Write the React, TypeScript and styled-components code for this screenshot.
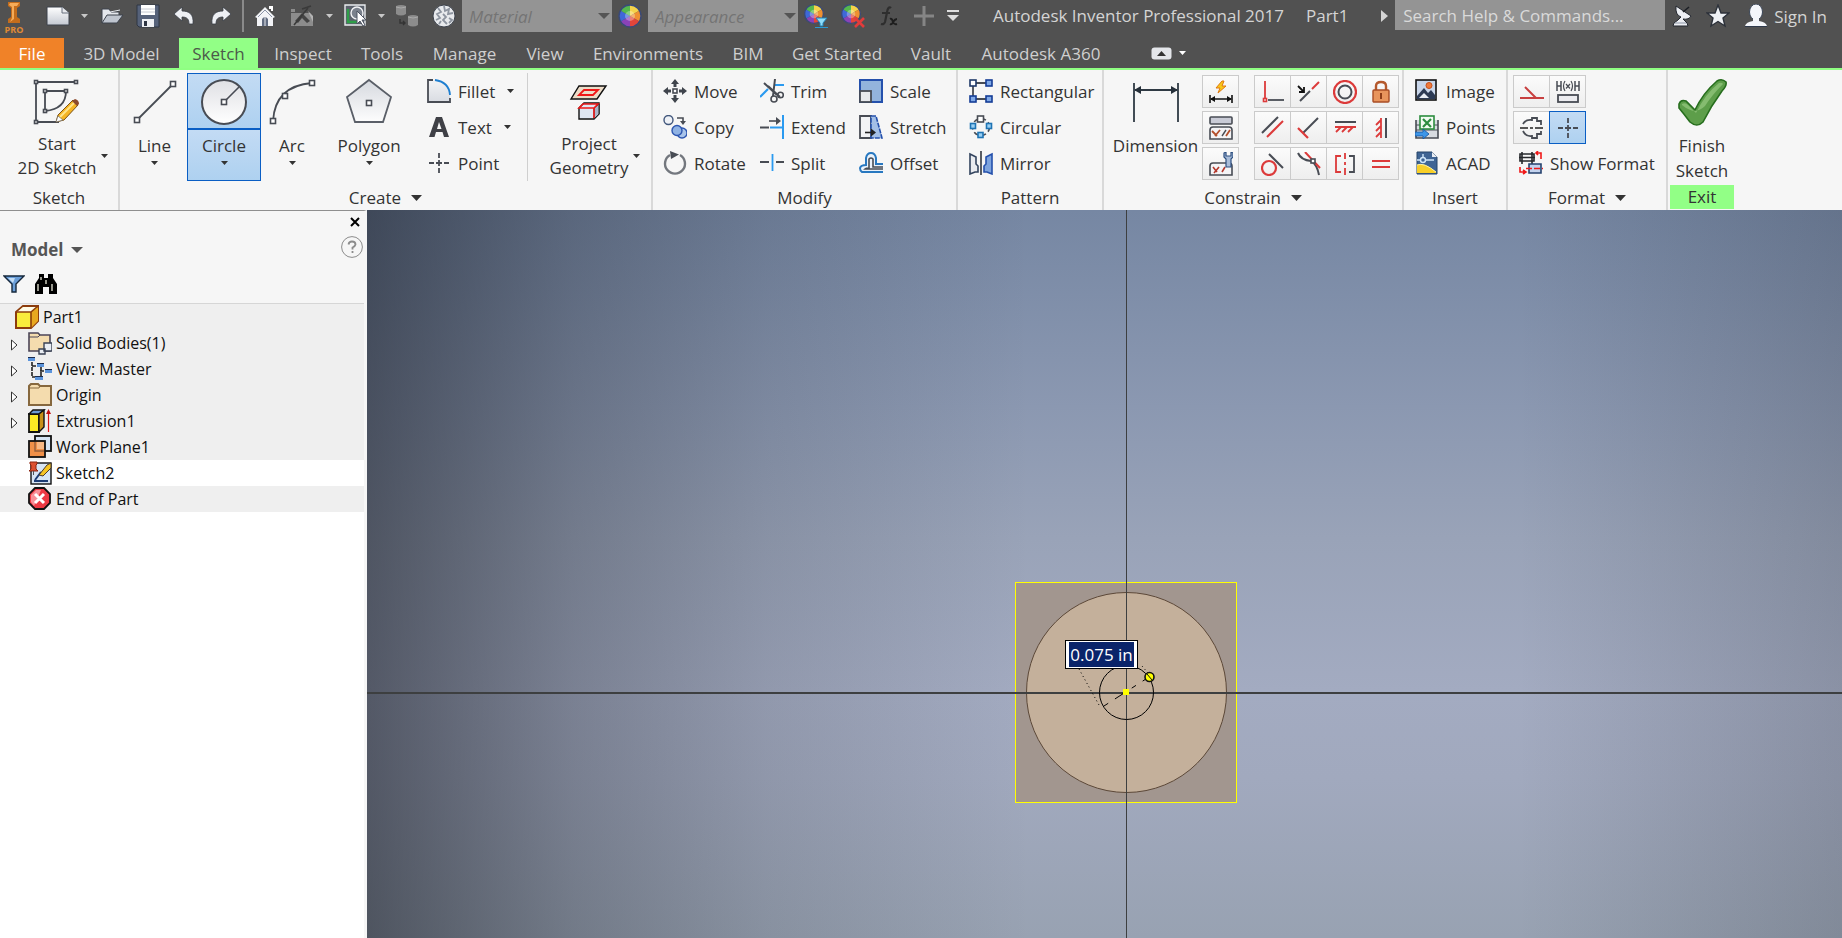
import React from "react";
import styled, { createGlobalStyle, css } from "styled-components";

const UI = `"Open Sans", "Noto Sans", sans-serif`;

const Global = createGlobalStyle`
  * { box-sizing: border-box; }
  body { margin: 0; background: #fff; font-family: ${UI}; color: #333; }
  button, input, select { font: inherit; color: inherit; margin: 0; }
  svg { display: block; flex: none; }
`;

const bare = css`
  border: 0;
  padding: 0;
  background: none;
  display: flex;
  align-items: center;
  justify-content: center;
`;

const App = styled.div`
  min-height: 100vh;
  display: flex;
  flex-direction: column;
`;

/* ---------- title bar ---------- */

const TitleBar = styled.header`
  height: 38px;
  background: #515151;
  display: flex;
  align-items: flex-start;
  color: #d4d4d4;
  font-size: 17px;
`;
const Tool = styled.button<{ $w: number }>`
  ${bare}
  width: ${(p) => p.$w}px;
  height: 32px;
`;
const Logo = styled.div`
  width: 43px;
  padding: 2px 15px 0 0;
  display: flex;
  flex-direction: column;
  align-items: center;
  color: #e08a34;
  font-size: 9px;
  line-height: 12px;
  font-weight: 700;
`;
const Divider = styled.span`
  width: 2px;
  height: 32px;
  margin: 0 3px 0 2px;
  background: #8a8a8a;
`;
const Combo = styled.label`
  position: relative;
  width: 150px;
  height: 32px;
  svg { position: absolute; right: 2px; top: 13px; }
`;
const ComboSelect = styled.select`
  appearance: none;
  width: 100%;
  height: 32px;
  border: 0;
  border-radius: 0;
  padding: 0 20px 0 7px;
  background: #949494;
  color: #747474;
  font-style: italic;
  opacity: 1;
`;
const Title = styled.h1`
  margin: 0 0 0 29px;
  font-size: 17px;
  font-weight: 400;
  line-height: 32px;
  white-space: pre;
`;
const DocName = styled.span`
  margin-left: 22px;
  line-height: 32px;
`;
const Search = styled.input`
  width: 270px;
  height: 30px;
  border: 0;
  padding: 0 8px;
  background: #949494;
  &::placeholder { color: #dadada; opacity: 1; }
`;
const TitleRight = styled.div`
  margin-left: auto;
  padding-right: 15px;
  display: flex;
`;
const SignIn = styled.button`
  ${bare}
  height: 32px;
  margin-left: 7px;
  gap: 6px;
`;

/* ---------- tabs ---------- */

const Tabs = styled.nav`
  height: 32px;
  background: #515151;
  border-bottom: 2px solid #8fff82;
  display: flex;
  align-items: stretch;
  font-size: 17px;
`;
const Tab = styled.button<{ $kind?: "file" | "active"; $w: number }>`
  ${bare}
  width: ${(p) => p.$w}px;
  white-space: nowrap;
  color: ${(p) => (p.$kind === "file" ? "#fff" : p.$kind === "active" ? "#4c5a4a" : "#cfcfcf")};
  background: ${(p) => (p.$kind === "file" ? "#f08228" : p.$kind === "active" ? "#92ff86" : "none")};
`;
const MinimizeTab = styled.button`
  ${bare}
  margin-left: 34px;
  gap: 7px;
`;

/* ---------- ribbon ---------- */

const Ribbon = styled.div`
  height: 140px;
  background: #f6f6f6;
  display: flex;
  font-size: 17px;
`;
const Panel = styled.section<{ $w: number }>`
  width: ${(p) => p.$w}px;
  border-right: 2px solid #d9d9d9;
  display: flex;
  flex-direction: column;
`;
const PanelBody = styled.div<{ $pad?: number; $h?: number }>`
  height: ${(p) => p.$h ?? 116}px;
  padding: 3px 0 0 ${(p) => p.$pad ?? 0}px;
  display: flex;
  align-items: flex-start;
`;
const PanelTitle = styled.h2`
  margin: 0;
  height: 24px;
  font-size: 17px;
  font-weight: 400;
  line-height: 24px;
  display: flex;
  align-items: center;
  justify-content: center;
  gap: 10px;
`;
const Big = styled.button<{ $w: number }>`
  ${bare}
  width: ${(p) => p.$w}px;
  height: 108px;
  padding-top: 5px;
  flex-direction: column;
  justify-content: flex-start;
  line-height: 24px;
`;
const BigLabel = styled.span<{ $two?: boolean }>`
  display: flex;
  flex-direction: column;
  align-items: center;
  gap: ${(p) => (p.$two ? 0 : 3)}px;
  padding-top: ${(p) => (p.$two ? 6 : 8)}px;
  white-space: nowrap;
`;
const TwoLine = styled.span`
  display: flex;
  align-items: center;
  gap: 5px;
  text-align: center;
  padding-left: 12px;
`;
const FinishLabel = styled.span`
  padding-top: 5px;
  line-height: 25px;
`;
const CircleTool = styled.div`
  width: 74px;
  height: 108px;
  margin: 0 2px 0 0;
  border: 1px solid #0a5ec4;
  display: flex;
  flex-direction: column;
  background: #b6d4f2;
`;
const CircleHalf = styled.button<{ $h: number }>`
  ${bare}
  height: ${(p) => p.$h}px;
  flex-direction: column;
  gap: 3px;
  line-height: 24px;
  padding-top: 1px;
  background: linear-gradient(#c3dbf4, #aed1f0);
  & + & {
    border-top: 2px solid #0a5ec4;
    justify-content: flex-start;
    padding-top: 4px;
  }
`;
const List = styled.div<{ $w: number; $inset?: number }>`
  width: ${(p) => p.$w}px;
  padding-left: ${(p) => p.$inset ?? 0}px;
`;
const Small = styled.button`
  ${bare}
  height: 36px;
  justify-content: flex-start;
  gap: 7px;
  white-space: nowrap;
  svg + span + svg { margin-left: 5px; }
`;
const VLine = styled.span`
  width: 1px;
  height: 108px;
  background: #cfcfcf;
`;
const IconGrid = styled.div<{ $cols: number; $rows: number }>`
  display: grid;
  height: ${(p) => p.$rows * 36}px;
  grid-template-columns: repeat(${(p) => p.$cols}, 36px);
  grid-auto-rows: 36px;
  padding-top: 2px;
`;
const Cell = styled.button<{ $on?: boolean }>`
  ${bare}
  height: 33px;
  margin-right: -1px;
  border: 1px solid ${(p) => (p.$on ? "#0a5ec4" : "#cbcbcb")};
  background: ${(p) => (p.$on ? "linear-gradient(#c3dbf4, #aed1f0)" : "linear-gradient(#fbfbfb, #eeeeee)")};
  z-index: ${(p) => (p.$on ? 1 : 0)};
`;
const ExitPanel = styled.section`
  width: 68px;
  padding: 0 2px;
`;
const Exit = styled(PanelTitle)`
  background: #92ff86;
`;

/* ---------- workspace ---------- */

const Workspace = styled.main`
  flex: 1;
  display: flex;
`;
const Browser = styled.aside`
  width: 367px;
  border-top: 1px solid #8f8f8f;
  border-right: 3px solid #f6f6f6;
  background: #fff;
  display: flex;
  flex-direction: column;
`;
const BrowserHead = styled.div`
  height: 93px;
  background: #f6f6f6;
  border-bottom: 1px solid #d6d6d6;
  display: grid;
  grid-template-rows: 22px 32px 38px;
`;
const HeadRow = styled.div`
  display: flex;
  align-items: flex-start;
  justify-content: space-between;
  padding: 3px 1px 0 11px;
`;
const HeadTools = styled.div`
  display: flex;
  align-items: center;
  gap: 9px;
  padding-left: 3px;
`;
const CloseRow = styled.div`
  display: flex;
  align-items: center;
  justify-content: flex-end;
  padding-right: 4px;
`;
const Plain = styled.button`
  ${bare}
  gap: 7px;
`;
const ModelTitle = styled(Plain)`
  font-weight: 700;
  font-size: 17px;
  line-height: 28px;
  color: #555;
`;
const Tree = styled.ul`
  list-style: none;
  margin: 0;
  padding: 0;
`;
const Node = styled.li<{ $root?: boolean; $on?: boolean }>`
  height: 26px;
  padding-left: ${(p) => (p.$root ? 15 : 11)}px;
  background: ${(p) => (p.$on ? "#fff" : "#efefef")};
  display: flex;
  align-items: center;
  gap: 4px;
  font-size: 16px;
  line-height: 24px;
  color: #111;
`;
const Twist = styled.span`
  width: 13px;
  padding-top: 3px;
`;
const Viewport = styled.section`
  flex: 1;
  position: relative;
  overflow: hidden;
  background:
    linear-gradient(90deg, rgba(16, 19, 26, 0.54), rgba(16, 19, 26, 0.28) 14%, rgba(16, 19, 26, 0.12) 27%, transparent 45%, transparent 78%, rgba(16, 19, 26, 0.17)),
    linear-gradient(#7687a3, #8b98b1 27%, #99a3b8 45%, #a3abc1 66%, #a1a9be 78%, #98a2b2);
`;
const AxisX = styled.span`
  position: absolute;
  left: 0;
  right: 0;
  top: 66.21%;
  height: 2px;
  background: #3d3f40;
`;
const AxisY = styled.span`
  position: absolute;
  top: 0;
  bottom: 0;
  left: 51.46%;
  width: 1px;
  background: #3d3f40;
`;
const Origin = styled.div`
  position: absolute;
  left: 51.46%;
  top: 66.21%;
`;
const Profile = styled.svg`
  position: absolute;
  left: -112px;
  top: -111px;
`;
const ValueBox = styled.input`
  position: absolute;
  left: -61px;
  top: -52px;
  width: 73px;
  height: 29px;
  border: 1px solid #000;
  padding: 0 1px;
  background: #0a246a;
  box-shadow: inset 0 0 0 1px #fff, inset 3px 0 #fff, inset -3px 0 #fff;
  color: #fff;
  font-size: 17px;
  text-align: center;
`;

/* ---------- icons ---------- */

const Svg = ({ s = 24, h, children }: { s?: number; h?: number; children: React.ReactNode }) => (
  <svg width={s} height={h ?? s} viewBox={`0 0 ${s} ${h ?? s}`} fill="none" aria-hidden="true">{children}</svg>
);
const Caret = ({ s = 7, c = "#333" }: { s?: number; c?: string }) => (
  <Svg s={s} h={Math.ceil(s / 2)}><path d={`M0 0H${s}L${s / 2} ${Math.ceil(s / 2)}Z`} fill={c} /></Svg>
);
const G = "#484c54";
const R = "#dc3a3a";
const Sq = ({ x, y, n = 4, f = "#fff", c = G }: { x: number; y: number; n?: number; f?: string; c?: string }) => (
  <rect x={x - n / 2} y={y - n / 2} width={n} height={n} fill={f} stroke={c} strokeWidth="1.6" />
);
const Shade = ({ id, a = "#fff", b = "#ccd0d8" }: { id: string; a?: string; b?: string }) => (
  <linearGradient id={id} x1="0" y1="0" x2="0" y2="1"><stop stopColor={a} /><stop offset="1" stopColor={b} /></linearGradient>
);

const wheelColors = ["#f4d24a", "#ef9030", "#e2453a", "#8a42b8", "#3f68d8", "#55b84e"];
const Wheel = ({ cx, cy, r }: { cx: number; cy: number; r: number }) => (
  <g>
    {wheelColors.map((c, i) => {
      const a = ((i * 60 - 90) * Math.PI) / 180;
      const b = ((i * 60 - 30) * Math.PI) / 180;
      return <path key={c} fill={c} d={`M${cx} ${cy}L${cx + r * Math.cos(a)} ${cy + r * Math.sin(a)}A${r} ${r} 0 0 1 ${cx + r * Math.cos(b)} ${cy + r * Math.sin(b)}Z`} />;
    })}
    <circle cx={cx} cy={cy} r={r / 2.2} fill="#fff" opacity=".3" />
    <circle cx={cx} cy={cy} r={r} stroke="#3a4a78" strokeWidth="1.4" />
  </g>
);

const I = {
  logo: <Svg s={16} h={22}><path d="M2 0H14V4L11 6V15L14 17V21H2V17L5 15V6L2 4Z" fill="#c46d1c" /><path d="M4 1H13L11 4H8V17L4 20L6 16V5L3 3Z" fill="#f6ab58" /></Svg>,
  fresh: <Svg><defs><Shade id="nw" b="#c4c9d2" /></defs><path d="M1 3H16L23 9V21H1Z" fill="url(#nw)" stroke="#3c424c" /><path d="M16 3V9H23" fill="#e7e9ee" stroke="#68707e" /></Svg>,
  open: <Svg><path d="M2 19V5H9L11 8H19V12" fill="#e4e7ec" stroke="#3c424c" /><path d="M2 19L7 11H23L17 19Z" fill="#bfc5cf" stroke="#3c424c" /><path d="M10 8L20 6" stroke="#e4e7ec" /></Svg>,
  save: <Svg><path d="M1 1H23V23H3L1 21Z" fill="#56627a" stroke="#2f3644" /><path d="M5 1H19V11H5Z" fill="#fff" /><path d="M6 15H18V23H6Z" fill="#eef0f4" /><path d="M8 17H11V22H8Z" fill="#2f3644" /><path d="M5 5H19M5 8H19" stroke="#c6cad2" /></Svg>,
  undo: <Svg s={22}><path d="M1 9L9 2V6C16 6 21 9 20 19H16C16 14 14 12 9 12V16Z" fill="#eef0f4" stroke="#3a3f48" strokeWidth=".8" /></Svg>,
  redo: <Svg s={22}><path d="M21 9L13 2V6C6 6 1 9 2 19H6C6 14 8 12 13 12V16Z" fill="#eef0f4" stroke="#3a3f48" strokeWidth=".8" /></Svg>,
  home: <Svg s={22} h={24}><path d="M16 5V3H18V7" stroke="#fff" strokeWidth="2" /><path d="M1 13L11 3L21 13L19 14V22H3V14Z" fill="#f2f3f6" /><path d="M4 13L11 6L18 13" stroke="#8a93a6" /><path d="M8 22V15Q11 11 14 15V22Z" fill="#626c80" /><path d="M11 13V22" stroke="#e6e8ec" /></Svg>,
  pic: <Svg><path d="M1 5H5V8H1ZM1 9H20L23 13V22H1Z" fill="#8c8c8c" /><path d="M5 17L12 9L20 17L17 19L12 14L8 19Z" fill="#444" /><path d="M12 5L21 2M4 21L18 4" stroke="#3a3a3a" strokeWidth="1.6" /><path d="M18 7L23 12V18Z" fill="#b4b4b4" /></Svg>,
  pick: <Svg><path d="M1 1H21V21H1Z" fill="#5c626c" stroke="#e9ebee" strokeWidth="1.4" /><path d="M4 5V18H14" stroke="#2e9e48" strokeWidth="2.4" /><circle cx="13" cy="9" r="6" fill="#7a818c" stroke="#f2f3f5" strokeWidth="1.4" /><path d="M13 7V20L16 17L19 22L21 21L18 16H22Z" fill="#fff" stroke="#4d5462" /></Svg>,
  parts: <Svg><path d="M1 2Q6 0 11 2V10Q6 13 1 10ZM13 12Q18 10 23 12V21Q18 24 13 21Z" fill="#8c8c8c" /><path d="M1 3Q6 5 11 3M13 13Q18 15 23 13" stroke="#a9a9a9" /><path d="M5 15V19H10M8 17L10 19L8 21" stroke="#333" strokeWidth="1.4" /></Svg>,
  globe: <Svg><circle cx="12" cy="12" r="11" fill="#e8eaed" stroke="#3c424c" /><path d="M6 4L9 8L5 10L8 14L4 16M12 2L13 7L17 5L16 10L21 9M11 10L14 13L11 16L15 20M17 14L20 16L17 19M9 17L7 20" stroke="#8d949f" strokeWidth="1.8" /></Svg>,
  wheel: <Svg><Wheel cx={12} cy={12} r={11} /></Svg>,
  wheelAdd: <Svg><Wheel cx={10} cy={10} r={9.4} /><path d="M12 14H23L19 19V22H16V19Z" fill="#8fdcf8" stroke="#1f83b8" /><path d="M11 23.500H24" stroke="#2a9ad4" /></Svg>,
  wheelDel: <Svg><Wheel cx={10} cy={10} r={9.4} /><path d="M14 14L23 23M23 14L14 23" stroke="#e23b3b" strokeWidth="2.6" /></Svg>,
  fx: <Svg s={22}><path d="M13 3Q11 1 9.500 5L7 17Q6 20 3 19M4 8H12" stroke="#2e2e2e" strokeWidth="2.2" /><path d="M12 14Q14 13 15 17Q16 20 19 19M19 14Q17 14 15 17Q14 20 12 19" stroke="#1e1e1e" strokeWidth="2" /></Svg>,
  plus: <Svg s={22}><path d="M11 1V21M1 11H21" stroke="#858585" strokeWidth="3" /></Svg>,
  more: <Svg s={12} h={12}><path d="M0 1H12" stroke="#ddd" strokeWidth="2" /><path d="M0 5H12L6 11Z" fill="#ddd" /></Svg>,
  right: <Svg s={7} h={12}><path d="M0 0L7 6L0 12Z" fill="#d4d4d4" /></Svg>,
  dish: <Svg s={20} h={22}><path d="M4 1Q3 10 9 12L6 15L2 18L1 21H16L15 18L11 14Q17 15 19 11Z" fill="#eceef3" stroke="#22262e" /><path d="M11 7L17 2" stroke="#1b1e24" strokeWidth="1.6" /><path d="M3 18H14" stroke="#8d96a6" /></Svg>,
  star: <Svg s={24}><path d="M12 1L15 9H23L17 14L19 22L12 17.500L5 22L7 14L1 9H9Z" fill="#eef0f4" stroke="#2c313a" strokeWidth="1.4" /></Svg>,
  person: <Svg s={24}><ellipse cx="12" cy="8" rx="6.500" ry="8" fill="#f4f6fa" stroke="#3b4658" /><path d="M9 14H15V17Q22 18 23 22H1Q2 18 9 17Z" fill="#f4f6fa" /><path d="M1 22.500H23" stroke="#2f3a4c" /></Svg>,
};

const pencil = (
  <g><path d="M23 44L25 37L40 22L45 27L31 42Z" fill="#f6b524" stroke="#7c5214" /><path d="M27 39L42 24" stroke="#ffe48a" strokeWidth="2" /><path d="M39 23L42 21Q46 22 46 26L44 28Z" fill="#8c4a2c" /><path d="M23 44L25 38L30 42Z" fill="#fff" stroke="#666" strokeWidth=".6" /></g>
);
const B = {
  start: <Svg s={48}><path d="M43 4H3V44H26M12 13H33Q33 31 12 33Z" stroke={G} strokeWidth="1.8" />{[[3, 4], [43, 4], [3, 44], [12, 13], [33, 13], [12, 33]].map(([x, y]) => <Sq key={`${x}-${y}`} x={x} y={y} n={3} />)}{pencil}</Svg>,
  line: <Svg s={48}><path d="M6 42L42 6" stroke={G} strokeWidth="1.8" /><Sq x={6} y={42} n={5} /><Sq x={42} y={6} n={5} /></Svg>,
  circle: <Svg s={48}><defs><Shade id="ci" a="#dfe0e4" b="#fff" /></defs><circle cx="24" cy="24" r="22" fill="url(#ci)" stroke={G} strokeWidth="2" /><path d="M24 24L39 9" stroke={G} strokeWidth="1.6" /><Sq x={24} y={24} n={5} /></Svg>,
  arc: <Svg s={48}><path d="M5 43Q7 8 44 5" stroke={G} strokeWidth="1.8" /><Sq x={5} y={43} n={5} /><Sq x={17} y={18} n={5} /><Sq x={44} y={5} n={5} /></Svg>,
  polygon: <Svg s={48}><defs><Shade id="po" a="#d6d9df" b="#fdfdfd" /></defs><path d="M24 2L46 19L38 44H10L2 19Z" fill="url(#po)" stroke="#5a5f68" strokeWidth="1.8" /><Sq x={24} y={25} n={5} /></Svg>,
  project: <Svg s={48}><path d="M14 8H41L32 21H6Z" fill="#ecdcc8" stroke="#111" strokeWidth="1.4" /><path d="M19 12H33L28 17H14Z" stroke="#f01818" strokeWidth="1.8" /><path d="M14 30L19 25H34V36L29 41H14Z" fill="#dfe6f2" stroke="#111" strokeWidth="1.4" /><path d="M29 30V41L34 36V26Z" fill="#a9b4c8" stroke="#222" /><path d="M14 30L18 26H33L29 30ZM29 30V40" stroke="#f01818" strokeWidth="1.6" /></Svg>,
  dimension: <Svg s={48}><path d="M2 5V44M46 5V44M3 12H45" stroke="#2f3a44" strokeWidth="1.8" /><path d="M2 12L9 8V16ZM46 12L39 8V16Z" fill="#26303a" /></Svg>,
  finish: <Svg s={50}><path d="M2 26Q4 21 9 23L18 32Q26 15 40 3Q45 0 49 4Q50 8 45 13Q34 28 26 44Q20 50 13 44Q7 36 2 30Z" fill="#5d9e4a" stroke="#276e1e" strokeWidth="1.6" /><path d="M5 26Q8 24 11 27L19 35Q28 16 42 5Q45 4 46 6Q35 17 28 28Q18 38 5 27Z" fill="#93c57e" opacity=".75" /></Svg>,
};

const cross = <path d="M12 2V7M12 9V15M12 17V22M2 12H7M9 12H15M17 12H22" stroke={G} strokeWidth="1.8" />;
const S = {
  fillet: <Svg><defs><Shade id="fi" a="#f2f3f5" b="#d9dce2" /></defs><path d="M1 1H8Q22 4 23 16V23H1Z" fill="url(#fi)" /><path d="M6 1H1V23H23V19" stroke={G} strokeWidth="1.8" /><path d="M8 1Q22 3 23 16" stroke="#1f7fd0" strokeWidth="1.8" /></Svg>,
  text: <Svg><path d="M9 2H15L22 22H17L15.500 17H9L7.500 22H2ZM12 7L10 14H14.500Z" fill="#3f4046" fillRule="evenodd" /></Svg>,
  point: <Svg>{cross}</Svg>,
  move: <Svg><path d="M12 0L16 5H13.500V8H10.500V5H8ZM12 24L16 19H13.500V16H10.500V19H8ZM0 12L5 8V10.500H8V13.500H5V16ZM24 12L19 8V10.500H16V13.500H19V16Z" fill="#3f444c" /><Sq x={12} y={12} n={4} /></Svg>,
  copy: <Svg><circle cx="5.500" cy="5" r="4.500" fill="#eef1f6" stroke="#42577c" strokeWidth="1.4" /><path d="M14 3H20V7" stroke={G} strokeWidth="1.6" /><path d="M17 6H23L20 10Z" fill={G} /><circle cx="19" cy="18" r="5" stroke="#2d56b0" strokeWidth="1.4" fill="#a9c4ea" /><circle cx="14" cy="15.500" r="5" stroke="#2d56b0" strokeWidth="1.4" fill="#8fb2e4" /></Svg>,
  rotate: <Svg><path d="M7 4A10 10 0 1 0 17 4" stroke="#73777e" strokeWidth="2.4" /><path d="M7 0L16 3.500L8 8Z" fill={G} /></Svg>,
  trim: <Svg><path d="M0 18L8 10M14 6H24" stroke="#2a9af0" strokeWidth="2.2" /><path d="M4 4L17 16M15 0L13 17M8 7L20 18" stroke={G} strokeWidth="2" /><circle cx="20.500" cy="16" r="2.800" stroke={G} strokeWidth="1.6" /><circle cx="14" cy="20" r="3" stroke={G} strokeWidth="1.6" /></Svg>,
  extend: <Svg><path d="M0 12.500H9" stroke={G} strokeWidth="2" /><path d="M10 12.500H23M23 0V24" stroke="#2a9af0" strokeWidth="2" /><path d="M9 6H17" stroke={G} strokeWidth="1.6" /><path d="M16 2L21 6L16 10Z" fill={G} /></Svg>,
  split: <Svg><path d="M0 11H9M16 11H24" stroke={G} strokeWidth="1.8" /><path d="M12.500 3V20" stroke="#2a9af0" strokeWidth="1.8" /></Svg>,
  scale: <Svg><rect x="1" y="1" width="22" height="22" fill="#93b4dc" stroke="#2450ac" strokeWidth="2" /><rect x="1" y="12" width="11" height="11" fill="#e7e9ec" stroke={G} strokeWidth="1.8" /></Svg>,
  stretch: <Svg><path d="M1 1H12V23H1Z" fill="#f2f3f5" stroke={G} strokeWidth="1.8" /><path d="M12 1H17L23 23H12Z" fill="#a3bfe6" stroke="#2450ac" strokeWidth="1.6" strokeDasharray="5 1" /><path d="M6 17.500H13" stroke="#222" strokeWidth="1.6" /><path d="M12 13.500L17 17.500L12 21.500Z" fill="#222" /></Svg>,
  offset: <Svg><path d="M24 21H3Q1 20 1 17Q2 14 7 14V7Q8 2 12 2Q16 2 17 7V13H24" fill="#eaf2fb" stroke="#2878c0" strokeWidth="2" /><path d="M24 18H6Q7 17 10 17V8Q12 6 14 8V16H24" stroke={G} strokeWidth="1.6" /></Svg>,
  rect: <Svg><path d="M4 4H20M4 4V20H20" stroke={G} strokeWidth="1.8" /><Sq x={4} y={4} n={6} c="#1f3868" /><Sq x={20} y={4} n={6} f="#7fa8e6" c="#143c96" /><Sq x={4} y={20} n={6} f="#7fa8e6" c="#143c96" /><Sq x={20} y={20} n={6} f="#7fa8e6" c="#143c96" /></Svg>,
  circ: <Svg><circle cx="12" cy="12" r="8.500" stroke={G} strokeWidth="1.6" strokeDasharray="5 3" /><Sq x={11.5} y={4} n={6} /><Sq x={4} y={11} n={5} f="#9ad0f4" c="#1f74b4" /><Sq x={20} y={11} n={5} f="#9ad0f4" c="#1f74b4" /><Sq x={11.5} y={20} n={5} f="#9ad0f4" c="#1f74b4" /></Svg>,
  mirror: <Svg><path d="M1 3L7 6V13L9 15V21H6L1 23Z" fill="#e9ebef" stroke="#33445e" strokeWidth="1.6" /><path d="M23 3L17 6V13L15 15V21H18L23 23Z" fill="#7ea4de" stroke="#2450ac" strokeWidth="1.6" /><path d="M12 0V24" stroke={G} strokeWidth="1.8" /></Svg>,
  image: <Svg><rect x="1" y="1" width="20" height="20" fill="#c9d6ea" stroke="#111" strokeWidth="1.6" /><circle cx="14" cy="6.500" r="3" fill="#f07a3c" stroke="#c8501c" /><path d="M2 17L9 9L13 14L16 11L20 16V20H2Z" fill="#2c3a54" /><path d="M4 19L9 14L14 19Z" fill="#e8edf5" /></Svg>,
  points: <Svg><path d="M1 5V23H23V5" fill="#d7dbe0" stroke={G} strokeWidth="1.6" /><path d="M1 10H23M1 15H23" stroke={G} /><rect x="5" y="1" width="14" height="13" fill="#f2fbf2" stroke="#2b8c3e" strokeWidth="1.6" /><path d="M8 4L16 12M16 4L8 12" stroke="#2b8c3e" strokeWidth="2.2" /><path d="M0 17H8V14L14 19L8 24V21H0Z" fill="#3d96e8" stroke="#14509c" strokeWidth=".8" /></Svg>,
  acad: <Svg><path d="M2 1H17L22 6V23H2Z" fill="#3f6494" stroke="#274468" /><path d="M17 1V6H22Z" fill="#e9edf3" /><path d="M2 22V14Q8 10 21 21V22Z" fill="#f8cf28" /><path d="M2 14Q9 11 21 21" stroke="#fff3a8" /><circle cx="8" cy="9" r="2.500" stroke="#cfe6fa" strokeWidth="1.4" /><path d="M8 3V6M11 9H19M2 9H5" stroke="#cfe6fa" strokeWidth="1.4" /></Svg>,
  show: <Svg><path d="M1 3H15V10H1ZM3 1V13M13 1V13M0 6.500H16" stroke="#26282c" strokeWidth="1.6" /><path d="M10 13H22V22H10Z" fill="#c3d3ee" stroke="#26426e" strokeWidth="1.6" /><path d="M7 17.500H24" stroke="#f01818" strokeWidth="1.6" strokeDasharray="6 2" /><path d="M18 2H22V8M1 16V21H6M19 0L17 2L19 4M4 19L7 21L4 23" stroke="#f01818" strokeWidth="1.6" /></Svg>,
};

const C: Record<string, React.ReactNode> = {
  "Automatic dimensions": <Svg><path d="M13 1L7 8H11L9 13L17 6H13L15 1Z" fill="#f8c818" stroke="#e07810" /><path d="M1 15V23M23 15V23M2 19H22" stroke="#111" strokeWidth="1.6" /><path d="M1 19L6 16V22ZM23 19L18 16V22Z" fill="#111" /></Svg>,
  "Show constraints": <Svg><rect x="1" y="1" width="22" height="7" rx="1" fill="#c9cbd6" stroke={G} strokeWidth="1.6" /><path d="M1 23V14Q1 11 4 11H20Q23 11 23 14V23Z" fill="#f4f4f6" stroke={G} strokeWidth="1.6" /><path d="M3 15L8 20M6 20L11 14M17 20L21 14" stroke="#b4502c" strokeWidth="1.8" /><path d="M13 20L17 14" stroke={G} strokeWidth="1.4" /></Svg>,
  "Constraint settings": <Svg><path d="M1 23V14Q1 11 4 11H20Q23 11 23 14V23Z" fill="#f4f4f6" stroke={G} strokeWidth="1.6" /><path d="M4 15L8 20M5 21L10 15M13 20L16 15" stroke="#b4382c" strokeWidth="1.6" /><path d="M15 1V5L17 7V15H22V7L24 5V1L22 0V4H17V0Z" fill="#a8bcd8" stroke="#2d4f80" strokeWidth="1.2" /></Svg>,
};
const K: Record<string, React.ReactNode> = {
  Coincident: <Svg><path d="M4 1V18" stroke={R} strokeWidth="1.8" /><path d="M7 20H23" stroke={G} strokeWidth="1.8" /><Sq x={4} y={20} n={3} c={R} /></Svg>,
  Collinear: <Svg><path d="M3 21L13 11" stroke={G} strokeWidth="2" /><path d="M15 9L22 2" stroke={R} strokeWidth="2" /><path d="M1 6L6 11M7 7V12H2" stroke="#111" strokeWidth="1.8" /></Svg>,
  Concentric: <Svg><circle cx="12" cy="12" r="11" stroke={R} strokeWidth="2.2" /><circle cx="12" cy="12" r="6.500" stroke={G} strokeWidth="2" /></Svg>,
  Fix: <Svg><path d="M7 11V6Q7 2 12 2Q17 2 17 6V11" stroke="#b4582c" strokeWidth="2.4" /><rect x="4" y="10" width="16" height="12" rx="1" fill="#e8945c" stroke="#a84c24" strokeWidth="1.4" /><path d="M12 13V19" stroke="#8c3c18" strokeWidth="2" /></Svg>,
  Parallel: <Svg><path d="M1 17L17 1" stroke={G} strokeWidth="2" /><path d="M6 21L22 5" stroke={R} strokeWidth="2" /></Svg>,
  Perpendicular: <Svg><path d="M6 17L21 2" stroke={G} strokeWidth="2" /><path d="M1 12L11 22" stroke={R} strokeWidth="2.2" /></Svg>,
  Horizontal: <Svg><path d="M2 6H23" stroke={G} strokeWidth="2" /><path d="M2 11H23M8 11L3 16M14 11L9 16M20 11L15 16" stroke={R} strokeWidth="1.8" /></Svg>,
  Vertical: <Svg><path d="M17 2V22" stroke={G} strokeWidth="2" /><path d="M12 2V22M12 4L7 9M12 10L7 15M12 16L7 21" stroke={R} strokeWidth="1.8" /></Svg>,
  Tangent: <Svg><circle cx="8" cy="16" r="7" stroke={R} strokeWidth="2.2" /><path d="M8 2L22 16" stroke={G} strokeWidth="2" /></Svg>,
  Smooth: <Svg><path d="M1 1Q4 8 14 9Q20 12 22 23" stroke={G} strokeWidth="2" /><path d="M8 0L23 16" stroke={R} strokeWidth="2" /><Sq x={16} y={9} n={4} /></Svg>,
  Symmetric: <Svg><path d="M8 4H3V20H8M12 1V7M12 10V13M12 16V23" stroke={R} strokeWidth="1.8" /><path d="M16 4H21V20H16" stroke={G} strokeWidth="1.8" /></Svg>,
  Equal: <Svg><path d="M3 9H21M3 15H21" stroke={R} strokeWidth="2" /></Svg>,
};
const F: [string, React.ReactNode, boolean?][] = [
  ["Construction", <Svg key="c"><path d="M0 18H24M5 7L16 18" stroke="#c84040" strokeWidth="2" /></Svg>],
  ["Driven dimension", <Svg key="d"><path d="M1 1V11M1 6H5M5 1V11M19 1V11M19 6H23M23 1V11" stroke={G} strokeWidth="1.5" /><path d="M10 4L14 8.500M14 4L10 8.500M9 1Q6 6 9 11M15 1Q18 6 15 11" stroke={G} strokeWidth="1.2" /><rect x="2" y="15" width="20" height="7" fill="#ececf0" stroke={G} strokeWidth="1.8" /></Svg>],
  ["Centerline", <Svg key="l"><path d="M3 8Q6 3 12 4V2H17V5H21V9M3 15Q6 21 12 20V22H17V18H21V15" stroke={G} strokeWidth="1.8" /><path d="M0 12H24" stroke="#222" strokeWidth="1.6" strokeDasharray="8 2 3 2" /></Svg>],
  ["Center point", <Svg key="p">{cross}</Svg>, true],
];

const T = {
  part: <Svg><path d="M1 7L8 1H23V16L16 23H1Z" fill="#f9ec3c" stroke="#8c3c0c" strokeWidth="2" /><path d="M2 7L8 2H22L16 7Z" fill="#fffbe6" /><path d="M16 7L23 2V16L16 23Z" fill="#e8a820" /><path d="M1 7H16V23M16 7L23 1" stroke="#8c3c0c" strokeWidth="1.6" /></Svg>,
  bodies: <Svg><path d="M1 20V2H10L12 4H22V20Z" fill="#f4dcae" stroke="#4c4658" strokeWidth="1.6" /><path d="M1 6H10L12 4" stroke="#4c4658" /><path d="M16 12H24V20H16ZM11 18H17V23H11Z" fill="#e9edf3" stroke="#3a4254" strokeWidth="1.4" /></Svg>,
  view: <Svg><path d="M4 5V20M4 9H9M4 20H8M12 14H20M13 10V19" stroke="#222" strokeWidth="1.6" strokeDasharray="4 1" /><path d="M0 0H7V4H0ZM9 6H16V10H9ZM17 12H24V16H17ZM7 19H15V23H7Z" fill="#5b94dc" /><path d="M0 .5H7M9 6.500H16M17 12.500H24M7 19.500H15" stroke="#1c2c4c" /></Svg>,
  folder: <Svg><path d="M1 22V3L3 1H10L12 3H23V22Z" fill="#f4dcae" stroke="#86683e" strokeWidth="2" /><path d="M2 5H11L12 3" stroke="#86683e" /></Svg>,
  extrude: <Svg><path d="M1 5H11V23H1Z" fill="#fbe924" stroke="#111" strokeWidth="1.8" /><path d="M1 5L5 1H16L11 5Z" fill="#6a9ad4" stroke="#111" strokeWidth="1.4" /><path d="M11 5L16 1V18L11 23Z" fill="#c89018" stroke="#111" strokeWidth="1.4" /><path d="M20.500 2V23" stroke="#e01818" strokeWidth="1.2" /><path d="M20.500 0L23 5H18Z" fill="#c01010" /></Svg>,
  plane: <Svg><rect x="7" y="1" width="16" height="15" fill="#d6e4f4" stroke="#111" strokeWidth="1.8" /><rect x="1" y="6" width="16" height="16" fill="#f09048" stroke="#111" strokeWidth="1.8" /><path d="M9 7H16V14H9Z" fill="#f8b884" /><path d="M7 7V16H16" stroke="#96603c" strokeWidth="1.4" /></Svg>,
  sketch: <Svg><rect x="3" y="2" width="20" height="21" fill="#d7e5f4" stroke="#111" strokeWidth="1.4" /><path d="M6 20H20M7 19L13 11" stroke="#1c3c74" strokeWidth="2" /><path d="M11 14L19 4L23 2V7L15 15Z" fill="#f6c524" stroke="#4a3a2a" /><path d="M2 1H9V3L8 4V8L10 10H1L3 8V4L2 3Z" fill="#dc5030" stroke="#8c2410" /><path d="M5.500 10V14" stroke="#555" /></Svg>,
  end: <Svg><path d="M7 1H16L22 7V16L16 22H7L1 16V7Z" fill="#ec3a44" stroke="#111" strokeWidth="1.8" /><path d="M3 12V8L8 3H13L6 19L3 15Z" fill="#f89098" /><path d="M7 7L16 16M16 7L7 16" stroke="#fff" strokeWidth="3" /></Svg>,
};

const tree: { label: string; icon: React.ReactNode; open?: boolean; root?: boolean; on?: boolean }[] = [
  { label: "Part1", icon: T.part, root: true },
  { label: "Solid Bodies(1)", icon: T.bodies, open: true },
  { label: "View: Master", icon: T.view, open: true },
  { label: "Origin", icon: T.folder, open: true },
  { label: "Extrusion1", icon: T.extrude, open: true },
  { label: "Work Plane1", icon: T.plane },
  { label: "Sketch2", icon: T.sketch, on: true },
  { label: "End of Part", icon: T.end },
];

const tabs: [string, number, ("file" | "active")?][] = [
  ["File", 64, "file"], ["3D Model", 115], ["Sketch", 79, "active"], ["Inspect", 90], ["Tools", 68], ["Manage", 97],
  ["View", 64], ["Environments", 142], ["BIM", 58], ["Get Started", 120], ["Vault", 68], ["Autodesk A360", 152],
];

const Items = ({ w, inset, items }: { w: number; inset?: number; items: [string, React.ReactNode, boolean?][] }) => (
  <List $w={w} $inset={inset}>
    {items.map(([label, icon, menu]) => (
      <Small key={label}>{icon}<span>{label}</span>{menu && <Caret />}</Small>
    ))}
  </List>
);
const BigTool = ({ w, icon, label }: { w: number; icon: React.ReactNode; label: string }) => (
  <Big $w={w}>{icon}<BigLabel>{label}<Caret /></BigLabel></Big>
);

export default function InventorWindow() {
  return (
    <App>
      <Global />
      <TitleBar>
        <Logo>{I.logo}<span>PRO</span></Logo>
        <Tool $w={30} aria-label="New">{I.fresh}</Tool>
        <Tool $w={22} aria-label="New options"><Caret c="#c8c8c8" /></Tool>
        <Tool $w={34} aria-label="Open">{I.open}</Tool>
        <Tool $w={37} aria-label="Save">{I.save}</Tool>
        <Tool $w={36} aria-label="Undo">{I.undo}</Tool>
        <Tool $w={38} aria-label="Redo">{I.redo}</Tool>
        <Divider />
        <Tool $w={36} aria-label="Home">{I.home}</Tool>
        <Tool $w={38} aria-label="Update">{I.pic}</Tool>
        <Tool $w={16} aria-label="Update options"><Caret c="#c8c8c8" /></Tool>
        <Tool $w={38} aria-label="Select">{I.pick}</Tool>
        <Tool $w={12} aria-label="Select options"><Caret c="#c8c8c8" /></Tool>
        <Tool $w={39} aria-label="Components">{I.parts}</Tool>
        <Tool $w={36} aria-label="Material browser">{I.globe}</Tool>
        <Combo aria-label="Material">
          <ComboSelect disabled><option>Material</option></ComboSelect>
          <Caret s={12} c="#555" />
        </Combo>
        <Tool $w={36} aria-label="Appearance browser">{I.wheel}</Tool>
        <Combo aria-label="Appearance">
          <ComboSelect disabled><option>Appearance</option></ComboSelect>
          <Caret s={12} c="#555" />
        </Combo>
        <Tool $w={36} aria-label="Adjust appearance">{I.wheelAdd}</Tool>
        <Tool $w={38} aria-label="Clear appearance">{I.wheelDel}</Tool>
        <Tool $w={34} aria-label="Parameters">{I.fx}</Tool>
        <Tool $w={36} aria-label="Add">{I.plus}</Tool>
        <Tool $w={22} aria-label="Customize">{I.more}</Tool>
        <Title>Autodesk Inventor Professional 2017</Title>
        <DocName>Part1</DocName>
        <TitleRight>
          <Tool $w={22} aria-label="Collapse search">{I.right}</Tool>
          <Search placeholder="Search Help &amp; Commands..." aria-label="Search Help" />
          <Tool $w={34} aria-label="Communication center">{I.dish}</Tool>
          <Tool $w={38} aria-label="Favorites">{I.star}</Tool>
          <SignIn>{I.person}Sign In</SignIn>
        </TitleRight>
      </TitleBar>
      <Tabs>
        {tabs.map(([label, w, kind]) => <Tab key={label} $w={w} $kind={kind}>{label}</Tab>)}
        <MinimizeTab aria-label="Minimize ribbon">
          <Svg s={21} h={13}><rect x=".5" y=".5" width="20" height="12" rx="3" fill="#e4e6ea" /><path d="M6 9L10.500 4L15 9Z" fill="#333" /></Svg>
          <Caret c="#fff" />
        </MinimizeTab>
      </Tabs>
      <Ribbon>
        <Panel $w={120}>
          <PanelBody>
            <Big $w={114}>
              {B.start}
              <BigLabel $two><TwoLine><span>Start<br />2D Sketch</span><Caret /></TwoLine></BigLabel>
            </Big>
          </PanelBody>
          <PanelTitle>Sketch</PanelTitle>
        </Panel>
        <Panel $w={533}>
          <PanelBody $pad={2}>
            <BigTool w={65} icon={B.line} label="Line" />
            <CircleTool>
              <CircleHalf $h={54} aria-label="Draw circle">{B.circle}</CircleHalf>
              <CircleHalf $h={52}>Circle<Caret /></CircleHalf>
            </CircleTool>
            <BigTool w={58} icon={B.arc} label="Arc" />
            <BigTool w={96} icon={B.polygon} label="Polygon" />
            <Items w={110} inset={10} items={[["Fillet", S.fillet, true], ["Text", S.text, true], ["Point", S.point]]} />
            <VLine />
            <Big $w={122}>
              {B.project}
              <BigLabel $two><TwoLine><span>Project<br />Geometry</span><Caret /></TwoLine></BigLabel>
            </Big>
          </PanelBody>
          <PanelTitle>Create <Caret s={11} /></PanelTitle>
        </Panel>
        <Panel $w={305}>
          <PanelBody $pad={10}>
            <Items w={97} items={[["Move", S.move], ["Copy", S.copy], ["Rotate", S.rotate]]} />
            <Items w={99} items={[["Trim", S.trim], ["Extend", S.extend], ["Split", S.split]]} />
            <Items w={97} items={[["Scale", S.scale], ["Stretch", S.stretch], ["Offset", S.offset]]} />
          </PanelBody>
          <PanelTitle>Modify</PanelTitle>
        </Panel>
        <Panel $w={146}>
          <PanelBody $pad={11}>
            <Items w={130} items={[["Rectangular", S.rect], ["Circular", S.circ], ["Mirror", S.mirror]]} />
          </PanelBody>
          <PanelTitle>Pattern</PanelTitle>
        </Panel>
        <Panel $w={300}>
          <PanelBody $pad={5}>
            <Big $w={93}>{B.dimension}<BigLabel>Dimension</BigLabel></Big>
            <IconGrid $cols={1} $rows={3}>
              {Object.entries(C).map(([n, icon]) => <Cell key={n} aria-label={n}>{icon}</Cell>)}
            </IconGrid>
            <List $w={16} />
            <IconGrid $cols={4} $rows={3}>
              {Object.entries(K).map(([n, icon]) => <Cell key={n} aria-label={n}>{icon}</Cell>)}
            </IconGrid>
          </PanelBody>
          <PanelTitle>Constrain <Caret s={11} /></PanelTitle>
        </Panel>
        <Panel $w={104}>
          <PanelBody $pad={11}>
            <Items w={90} items={[["Image", S.image], ["Points", S.points], ["ACAD", S.acad]]} />
          </PanelBody>
          <PanelTitle>Insert</PanelTitle>
        </Panel>
        <Panel $w={160}>
          <PanelBody $pad={5}>
            <div>
              <IconGrid $cols={2} $rows={2}>
                {F.map(([n, icon, on]) => <Cell key={n} $on={on} aria-label={n}>{icon}</Cell>)}
              </IconGrid>
              <Items w={150} inset={6} items={[["Show Format", S.show]]} />
            </div>
          </PanelBody>
          <PanelTitle>Format <Caret s={11} /></PanelTitle>
        </Panel>
        <ExitPanel>
          <PanelBody $h={115}>
            <Big $w={64}>{B.finish}<FinishLabel>Finish<br />Sketch</FinishLabel></Big>
          </PanelBody>
          <Exit>Exit</Exit>
        </ExitPanel>
      </Ribbon>
      <Workspace>
        <Browser>
          <BrowserHead>
            <CloseRow>
              <Plain aria-label="Close"><Svg s={10}><path d="M1 1L9 9M9 1L1 9" stroke="#000" strokeWidth="2" /></Svg></Plain>
            </CloseRow>
            <HeadRow>
              <ModelTitle>Model<Caret s={12} c="#555" /></ModelTitle>
              <Plain aria-label="Help">
                <Svg s={22}><circle cx="11" cy="11" r="10.400" stroke="#8c8c8c" /><path d="M7.500 8.500Q8 5.500 11 5.500Q14.500 5.500 14.500 8.500Q14 10.500 11.500 11.500V13.500M11.500 15V17" stroke="#8c8c8c" strokeWidth="1.8" /></Svg>
              </Plain>
            </HeadRow>
            <HeadTools>
              <Plain aria-label="Filter">
                <Svg s={22} h={18}><path d="M1 1H21L13 9V17H9V9Z" fill="#6a9ed8" stroke="#16283c" strokeWidth="1.4" /><path d="M5 3H12L10 8Z" fill="#c3dcf4" /></Svg>
              </Plain>
              <Plain aria-label="Find">
                <Svg s={24} h={20}><path d="M5 0H10V4H14V0H19V4L23 10V20H15V13H9V20H1V10L5 4Z" fill="#000" /><path d="M4 10V17M7 3V6M18 10V17M12 6V10" stroke="#d8d8c8" strokeWidth="1.4" /></Svg>
              </Plain>
            </HeadTools>
          </BrowserHead>
          <Tree>
            {tree.map((n) => (
              <Node key={n.label} $root={n.root} $on={n.on}>
                {!n.root && <Twist>{n.open && <Svg s={7} h={12}><path d="M.5 1L6 6L.5 11Z" fill="#fff" stroke="#333" /></Svg>}</Twist>}
                {n.icon}
                <span>{n.label}</span>
              </Node>
            ))}
          </Tree>
        </Browser>
        <Viewport aria-label="Sketch view">
          <Origin>
            <Profile width="224" height="224" viewBox="-112 -111 224 224" fill="none">
              <rect x="-110.500" y="-109.500" width="221" height="220" fill="#a2968f" stroke="#ff0" />
              <circle cx=".5" cy=".5" r="100" fill="#c4b09b" stroke="#5c4838" />
            </Profile>
          </Origin>
          <AxisX />
          <AxisY />
          <Origin>
            <Profile width="224" height="224" viewBox="-112 -111 224 224" fill="none">
              <circle cx=".5" cy=".5" r="27" stroke="#000" />
              <path d="M-22 14L23 -15" stroke="#000" strokeDasharray="5 8 12 8" />
              <path d="M-47 -23L-27 13M16 -26L22 -19" stroke="#000" strokeDasharray="1 3" />
              <rect x="-3" y="-3" width="6" height="6" fill="#ff0" />
              <circle cx="23.500" cy="-15" r="4.500" fill="#ff0" stroke="#111" strokeWidth="1.600" />
              <path d="M21 -18L26 -12" stroke="#111" />
            </Profile>
            <ValueBox defaultValue="0.075 in" aria-label="Diameter" />
          </Origin>
        </Viewport>
      </Workspace>
    </App>
  );
}
